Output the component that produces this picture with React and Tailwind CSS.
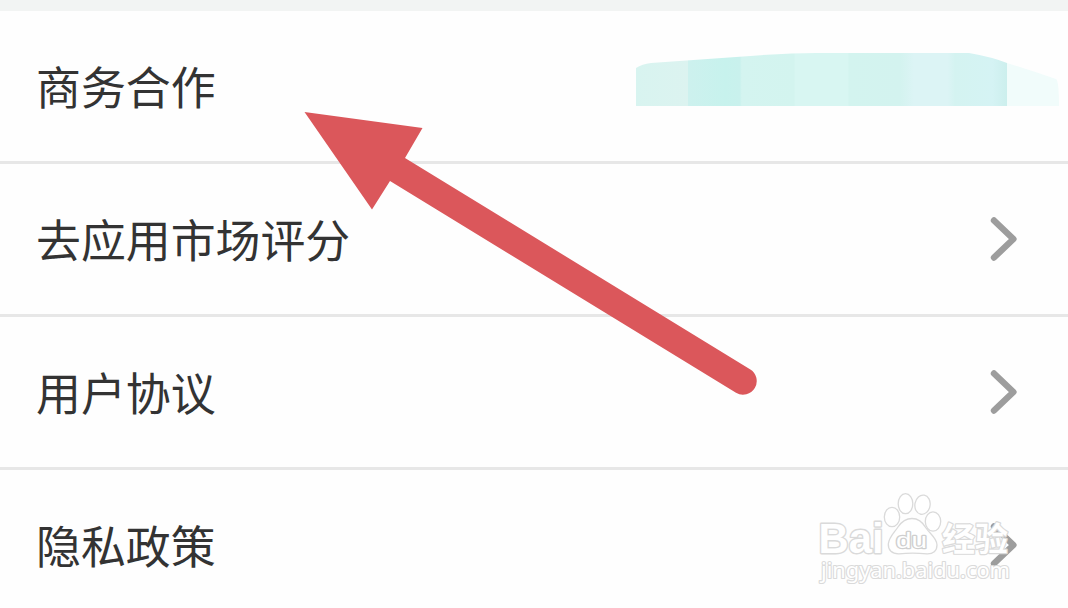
import React from 'react';

const rows = [
  { label: '商务合作', contact: true },
  { label: '去应用市场评分' },
  { label: '用户协议' },
  { label: '隐私政策' },
];

function Chevron() {
  return (
    <svg className="w-7 h-12 mr-[50px]" viewBox="0 0 28 48" fill="none">
      <path d="M4 5.5L23.4 24L4 42.5" stroke="#9d9d9d" strokeWidth="6.4" strokeLinecap="round" strokeLinejoin="round" />
    </svg>
  );
}

function ContactSmudge() {
  return (
    <svg className="w-[424px] h-[54px] mr-2 mb-[15px]" viewBox="0 0 424 54">
      <defs>
        <clipPath id="smudge">
          <path d="M0 16Q6 12 15 11L100 5Q150 1 180 1H333Q356 5 371 11Q397 19 420 27Q423 29 423 54H0Z" />
        </clipPath>
        <linearGradient id="mint" x1="0" x2="371" y1="0" y2="0" gradientUnits="userSpaceOnUse">
          <stop offset="0" stopColor="#d8f4f0" />
          <stop offset="0.14" stopColor="#dcf3f0" />
          <stop offset="0.141" stopColor="#cdf1ee" />
          <stop offset="0.24" stopColor="#c7f2ed" />
          <stop offset="0.28" stopColor="#c9f1ed" />
          <stop offset="0.285" stopColor="#d4f4f0" />
          <stop offset="0.425" stopColor="#d3f4ef" />
          <stop offset="0.43" stopColor="#d8f6f2" />
          <stop offset="0.57" stopColor="#d8f6f2" />
          <stop offset="0.575" stopColor="#d3f4ef" />
          <stop offset="0.71" stopColor="#d3f3ef" />
          <stop offset="0.75" stopColor="#dcf4f5" />
          <stop offset="0.84" stopColor="#dcf4f5" />
          <stop offset="0.86" stopColor="#d4f3f1" />
          <stop offset="0.96" stopColor="#d5f3f4" />
          <stop offset="1" stopColor="#ccefed" />
        </linearGradient>
      </defs>
      <g clipPath="url(#smudge)">
        <rect width="371" height="54" fill="url(#mint)" />
        <rect x="371" width="53" height="54" fill="#f1fcfb" />
      </g>
    </svg>
  );
}

function Arrow() {
  return (
    <svg className="absolute left-[300px] top-[108px] w-[460px] h-[290px]" viewBox="300 108 460 290">
      <path d="M304.5 112L422.5 128L405 158L750 369.2A13.7 13.7 0 0 1 736 392.8L390 181L372 209.5Z" fill="#db575b" />
    </svg>
  );
}

function Watermark() {
  return (
    <svg
      className="absolute left-[810px] top-[485px] w-[220px] h-[110px]"
      viewBox="810 485 220 110"
      fill="#ffffff"
      stroke="#dadada"
      strokeWidth="1.3"
      strokeLinejoin="round"
    >
      {/* paw */}
      <ellipse cx="892" cy="517" rx="7.7" ry="9.7" />
      <ellipse cx="905.5" cy="503.7" rx="7.3" ry="10" />
      <ellipse cx="922.5" cy="504.7" rx="7.6" ry="9.7" transform="rotate(10 922.5 504.7)" />
      <ellipse cx="933" cy="521.5" rx="7.7" ry="9.7" />
      <path d="M898 527C902 521 906 518.5 912 518.5S922 521 926 528C930 534 937 538 937 545C937 551 933 554 927 553.8C919 553 906 553 899 553.8C892 554 888 550 888.3 544C889 537 894 533 898 527Z" />
      <g className="font-['Liberation_Sans',sans-serif]" paintOrder="stroke">
        <text x="818.5" y="552.5" fontSize="42" fontWeight="700" textLength="65" lengthAdjust="spacingAndGlyphs" strokeWidth="2.8">Bai</text>
        <text x="896" y="548" fontSize="22" textLength="31" lengthAdjust="spacingAndGlyphs" stroke="#cfcfcf" strokeWidth="2.4">du</text>
      </g>
      <text x="942" y="550.5" fontSize="33" fontWeight="700" textLength="66" lengthAdjust="spacingAndGlyphs" strokeWidth="2.4" paintOrder="stroke" className="font-['Noto_Sans_CJK_SC',sans-serif]">经验</text>
      <text x="821" y="578" fontSize="21" textLength="189" lengthAdjust="spacingAndGlyphs" strokeWidth="2.2" paintOrder="stroke" className="font-['Noto_Sans',sans-serif]">jingyan.baidu.com</text>
    </svg>
  );
}

export default function App() {
  return (
    <div className="relative w-[1068px] h-[608px] overflow-hidden bg-[#fefefe] font-['Noto_Sans_CJK_SC',sans-serif] text-[#333333]">
      <div className="h-[11px] bg-[#f2f4f3]"></div>
      <div className="flex flex-col">
        {rows.map((row) => (
          <div key={row.label} className="flex items-center justify-between h-[153px] pl-9 border-b-[3px] border-[#e7e7e7]">
            <span className="text-[44.9px] leading-none pt-px">{row.label}</span>
            {row.contact ? <ContactSmudge /> : <Chevron />}
          </div>
        ))}
      </div>
      <Arrow />
      <Watermark />
    </div>
  );
}
